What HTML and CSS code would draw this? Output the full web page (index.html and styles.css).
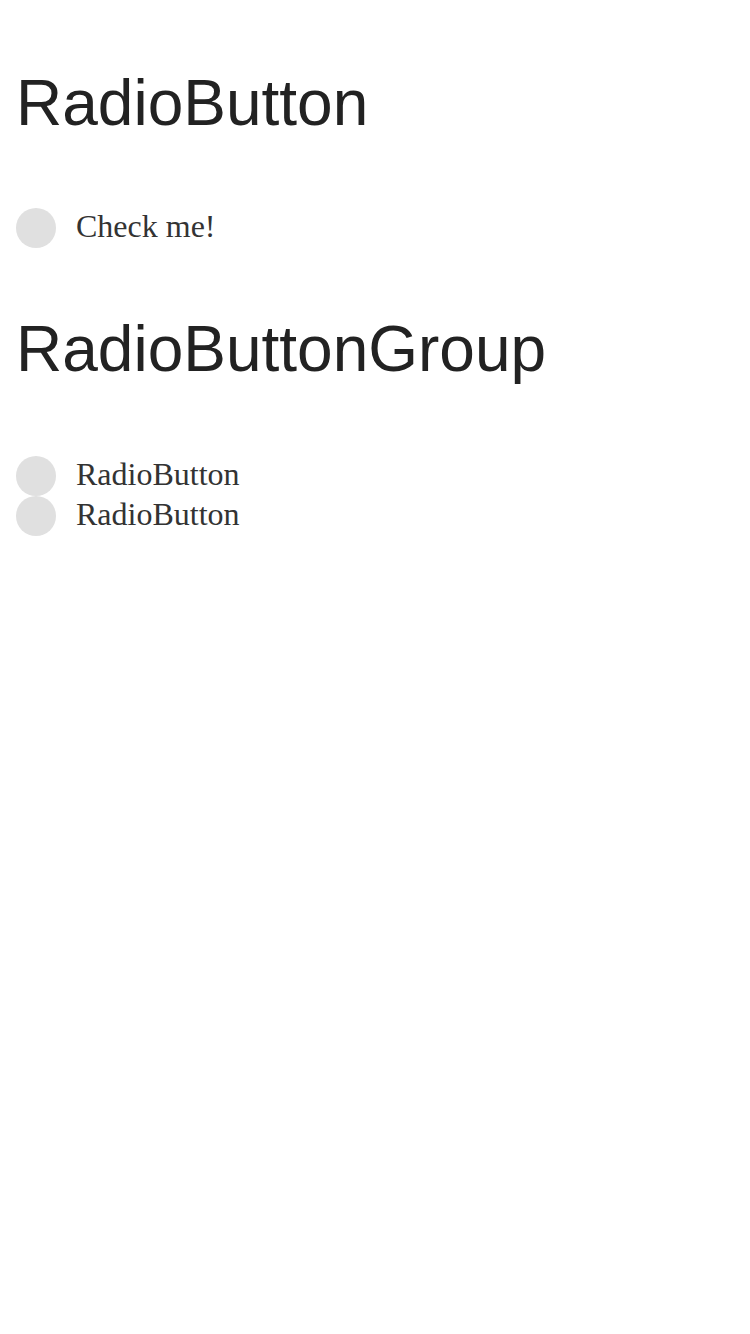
FILE: index.html
```html
<!DOCTYPE html>
<html>
<head>
<meta charset="utf-8">
<link rel="stylesheet" href="styles.css">
</head>
<body>
<main class="page">
  <section class="demo">
    <h1 class="title">RadioButton</h1>
    <div class="radio-list">
      <label class="radio"><span class="dot"></span><span class="label">Check me!</span></label>
    </div>
  </section>
  <section class="demo">
    <h1 class="title">RadioButtonGroup</h1>
    <div class="radio-list">
      <label class="radio"><span class="dot"></span><span class="label">RadioButton</span></label>
      <label class="radio"><span class="dot"></span><span class="label">RadioButton</span></label>
    </div>
  </section>
</main>
</body>
</html>
```

FILE: styles.css
```css
html, body {
  margin: 0;
  padding: 0;
  background: #ffffff;
}
.page {
  padding: 0 16px;
  display: flex;
  flex-direction: column;
}
.demo {
  display: flex;
  flex-direction: column;
}
.title {
  margin: 66px 0 68px;
  font-family: "Liberation Sans", Arial, sans-serif;
  font-weight: normal;
  font-size: 64px;
  line-height: 74px;
  color: #222222;
}
.demo + .demo .title {
  margin-top: 64px;
  margin-bottom: 70px;
}
.radio-list {
  display: flex;
  flex-direction: column;
}
.radio {
  display: flex;
  align-items: center;
  height: 40px;
  gap: 20px;
}
.dot {
  width: 40px;
  height: 40px;
  border-radius: 50%;
  background: #e0e0e0;
  flex: none;
}
.label {
  font-family: "Liberation Serif", "Times New Roman", serif;
  font-size: 32px;
  line-height: 36px;
  padding-bottom: 4px;
  color: #333333;
}
```
